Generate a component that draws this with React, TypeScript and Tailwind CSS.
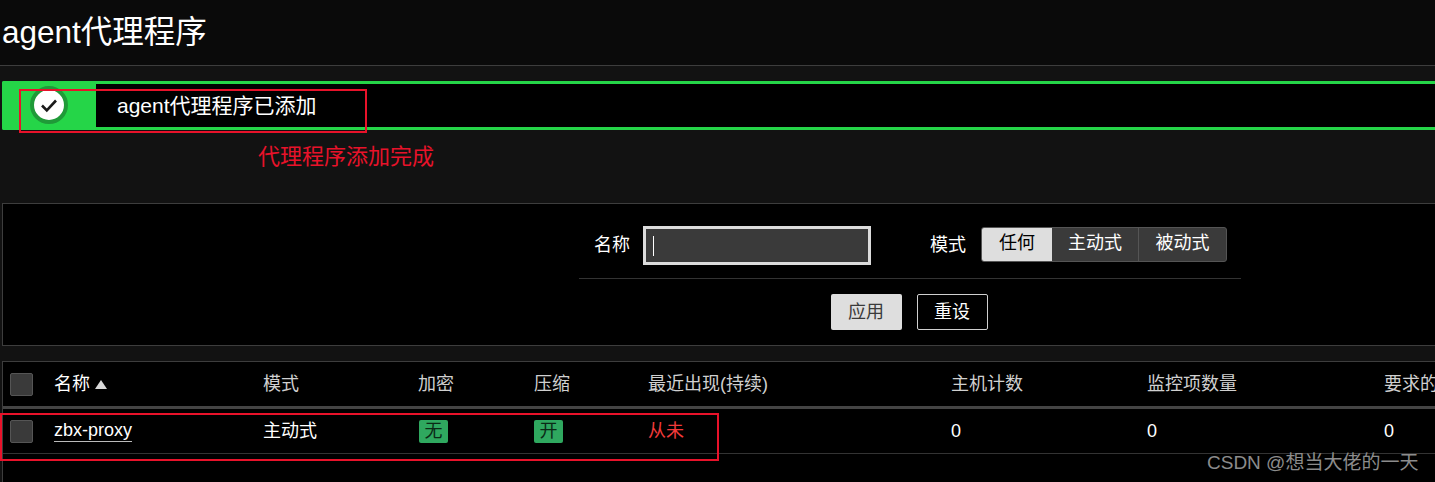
const font = { fontFamily: '"Liberation Sans", "Noto Sans CJK SC", sans-serif' }

const headers = ['模式', '加密', '压缩', '最近出现(持续)', '主机计数', '监控项数量', '要求的vps']

function Checkbox() {
  return <div className="w-[23px] h-[23px] rounded-[2px] border border-[#555] bg-[#3a3a3a]" />
}

export default function App() {
  return (
    <div className="relative w-[1435px] h-[482px] overflow-hidden bg-[#121212] text-white" style={font}>
      {/* Title */}
      <div className="h-[66px] bg-[#0a0a0a] border-b border-[#3d3d3d] pl-[2px] pt-[13px] w-full">
        <h1 className="text-[31.5px] leading-[38px] whitespace-nowrap">agent代理程序</h1>
      </div>

      {/* Success message */}
      <div className="ml-[2px] mt-[15px] w-[1816px] h-[49px] flex rounded-l-[2px] border-y-[3px] border-[#25d548] bg-black">
        <div className="w-[94px] bg-[#25d548] -my-[3px] rounded-l-[2px] flex items-center pl-[28px]">
          <div className="w-[38px] h-[38px] rounded-full border-[4px] border-[#1f9a38] bg-white flex items-center justify-center -mt-[2px]">
            <svg width="24" height="24" viewBox="0 0 24 24" fill="none">
              <path d="M5 12.5l4.8 4.8L19 7.5" stroke="#1a1a1a" strokeWidth="2.6" />
            </svg>
          </div>
        </div>
        <div className="pl-[21px] text-[21px] leading-[44px] whitespace-nowrap">agent代理程序已添加</div>
      </div>

      {/* Filter */}
      <div className="ml-[2px] mt-[73px] w-[1816px] h-[143px] bg-black border border-[#3d3d3d] flex flex-col items-center">
        <div className="w-[662px] h-[75px] border-b border-[#333] flex items-start pt-[22px] text-[18px]">
          <span className="ml-[15px] w-[49px] leading-[38px]">名称</span>
          <div className="w-[228px] h-[39px] border-[3px] border-[#dcdcdc] bg-[#3a3a3a] flex items-center pl-[7px]">
            <div className="w-px h-[20px] bg-white" />
          </div>
          <span className="ml-[59px] w-[51px] leading-[38px]">模式</span>
          <div className="flex h-[35px] mt-px rounded-[3px] border border-[#555] bg-[#3a3a3a] overflow-hidden">
            <div className="w-[70px] bg-[#dedede] text-black text-center leading-[30px]">任何</div>
            <div className="w-[87px] text-center leading-[30px] border-r border-[#555]">主动式</div>
            <div className="w-[87px] text-center leading-[30px]">被动式</div>
          </div>
        </div>
        <div className="flex gap-[15px] mt-[15px] pr-[2px] text-[18px]">
          <button className="w-[71px] h-[36px] rounded-[2px] bg-[#dedede] text-[#3a3a3a]">应用</button>
          <button className="w-[71px] h-[36px] rounded-[2px] border border-[#d0d0d0] bg-black text-white">重设</button>
        </div>
      </div>

      {/* Table */}
      <div className="ml-[2px] mt-[15px] w-[1816px] h-[130px] bg-black border-t border-l border-[#3d3d3d]">
        <div className="grid grid-cols-[44px_209px_155px_116px_114px_303px_196px_237px_1fr] h-[47px] border-b-[3px] border-[#444] pl-[7px] pt-px items-center text-[18px] text-[#d0d0d0]">
          <Checkbox />
          <div className="flex items-center gap-[5px] text-white">
            名称
            <span className="w-0 h-0 border-x-[6px] border-x-transparent border-b-[9px] border-b-[#d8d8d8]" />
          </div>
          {headers.map((h) => (
            <div key={h} className="whitespace-nowrap">{h}</div>
          ))}
        </div>
        <div className="grid grid-cols-[44px_209px_155px_116px_114px_303px_196px_237px_1fr] h-[45px] border-b border-[#333] pl-[7px] items-center text-[18px] text-white">
          <Checkbox />
          <a className="w-fit leading-[21px] border-b border-[#bbb]">zbx-proxy</a>
          <div>主动式</div>
          <div>
            <span className="inline-block ml-px w-[29px] h-[23px] rounded-[2px] bg-[#2fa85f] text-[#0b2a16] text-center leading-[23px]">无</span>
          </div>
          <div>
            <span className="inline-block w-[29px] h-[23px] rounded-[2px] bg-[#2fa85f] text-[#0b2a16] text-center leading-[23px]">开</span>
          </div>
          <div className="text-[#f23a3a]">从未</div>
          <div>0</div>
          <div>0</div>
          <div>0</div>
        </div>
      </div>

      {/* Annotations */}
      <div className="absolute left-[19px] top-[89px] w-[348px] h-[44px] border-2 border-[#e8122a]" />
      <div className="absolute left-[258px] top-[143px] text-[22px] leading-[28px] text-[#e8122a] whitespace-nowrap">代理程序添加完成</div>
      <div className="absolute left-0 top-[413px] w-[719px] h-[48px] border-2 border-[#e8122a]" />
      <div className="absolute left-[1207px] top-[451px] text-[19px] leading-[24px] text-[#8c8c8c] whitespace-nowrap">CSDN @想当大佬的一天</div>
    </div>
  )
}
